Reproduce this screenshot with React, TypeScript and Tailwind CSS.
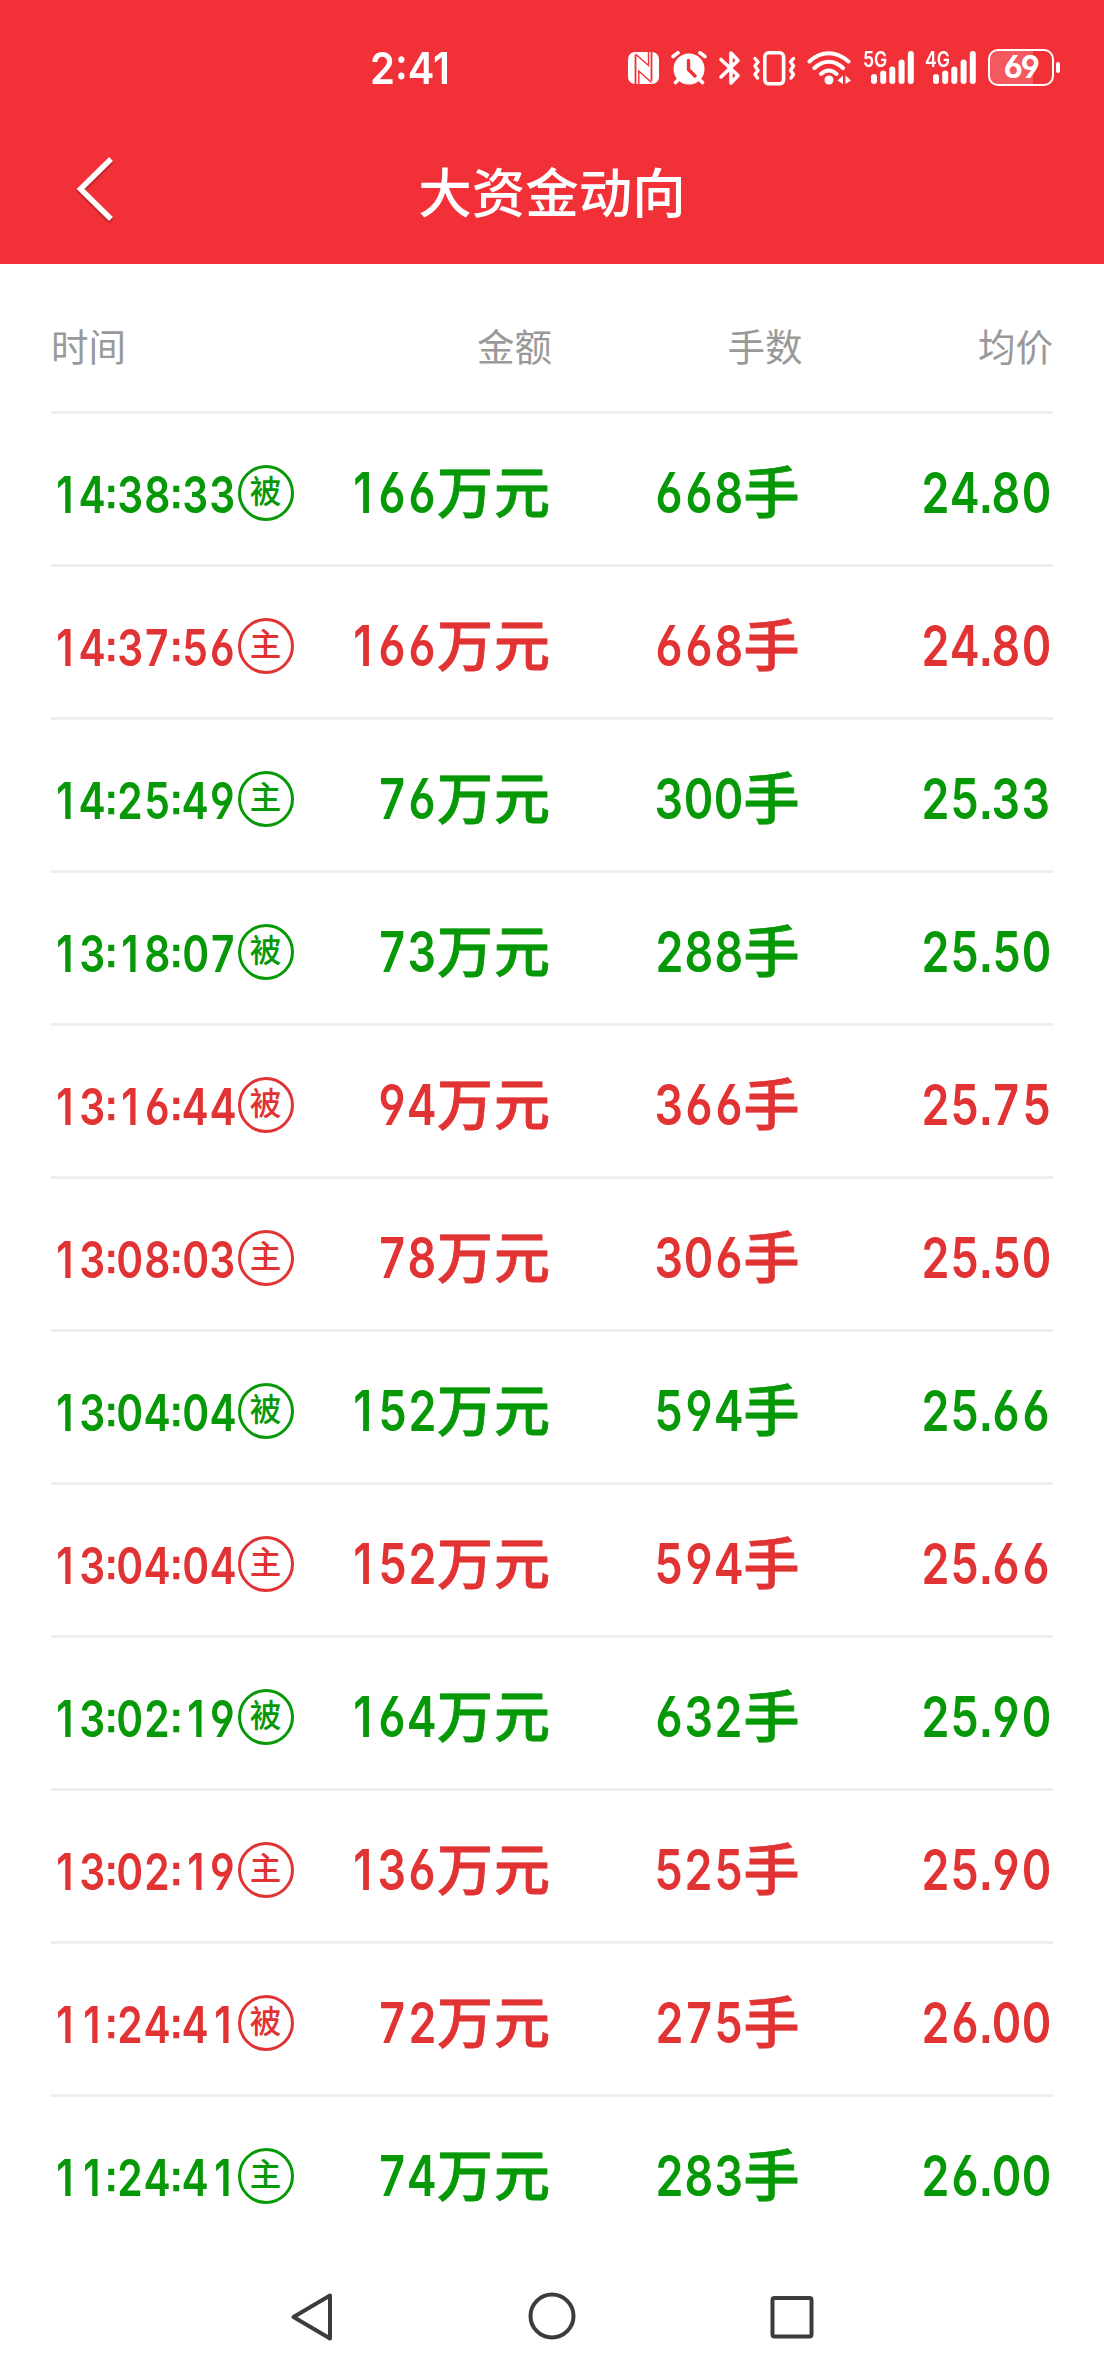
import React from "react";

type Tone = "up" | "down";
type Row = { time: string; tag: "主" | "被"; amount: string; lots: string; price: string; tone: Tone };

const rows: Row[] = [
  { time: "14:38:33", tag: "被", amount: "166", lots: "668", price: "24.80", tone: "down" },
  { time: "14:37:56", tag: "主", amount: "166", lots: "668", price: "24.80", tone: "up" },
  { time: "14:25:49", tag: "主", amount: "76", lots: "300", price: "25.33", tone: "down" },
  { time: "13:18:07", tag: "被", amount: "73", lots: "288", price: "25.50", tone: "down" },
  { time: "13:16:44", tag: "被", amount: "94", lots: "366", price: "25.75", tone: "up" },
  { time: "13:08:03", tag: "主", amount: "78", lots: "306", price: "25.50", tone: "up" },
  { time: "13:04:04", tag: "被", amount: "152", lots: "594", price: "25.66", tone: "down" },
  { time: "13:04:04", tag: "主", amount: "152", lots: "594", price: "25.66", tone: "up" },
  { time: "13:02:19", tag: "被", amount: "164", lots: "632", price: "25.90", tone: "down" },
  { time: "13:02:19", tag: "主", amount: "136", lots: "525", price: "25.90", tone: "up" },
  { time: "11:24:41", tag: "被", amount: "72", lots: "275", price: "26.00", tone: "up" },
  { time: "11:24:41", tag: "主", amount: "74", lots: "283", price: "26.00", tone: "down" },
];

/* Digits with straight-stemmed 6 and 9 and square punctuation. */
const digits =
  "whitespace-nowrap font-['Inter'] font-semibold [font-feature-settings:'cv03','cv04','ss07']";

function SignalBars({ label }: { label: string }) {
  return (
    <div className="relative h-[33px] w-[51px]">
      <svg className="block" width="51" height="33" viewBox="0 0 51 33" fill="#fff">
        <rect x="7" y="23" width="6" height="10" rx="3" />
        <rect x="16.2" y="19.5" width="6" height="13.5" rx="3" />
        <rect x="25.3" y="15.5" width="6" height="17.5" rx="3" />
        <rect x="34.6" y="8.5" width="6" height="24.5" rx="3" />
        <rect x="43.8" y="0" width="6" height="33" rx="3" />
      </svg>
      <span className="absolute -left-px top-0 origin-left scale-x-[0.82] font-['Inter'] text-[21.5px] font-semibold leading-[17px]">
        {label}
      </span>
    </div>
  );
}

function StatusBar() {
  return (
    <div className="relative h-[134px] text-white">
      <div className="absolute left-[370px] top-[46px] origin-left scale-x-[0.91] whitespace-nowrap font-['Inter'] text-[44px] font-semibold leading-[44px]">
        2:41
      </div>
      <div className="flex pl-[628px] pt-[51px]">
        <svg width="32" height="34" viewBox="0 0 32 34" fill="none">
          <rect x="0" y="1" width="31" height="32" rx="7" fill="#fff" />
          <path d="M7.5 4V33M23.5 1V30" stroke="#f23038" strokeWidth="1.8" />
          <path d="M7.500 3L20.500 14.500V1M23.500 31.500L10.800 20V33" stroke="#f23038" strokeWidth="1.4" />
        </svg>
        <svg className="ml-[11px]" width="37" height="34" viewBox="0 0 37 34" fill="none" strokeLinecap="round">
          <circle cx="18" cy="18" r="15.5" fill="#fff" />
          <path d="M2 5.5L7 1.8M29 1.8L34 5.5M8 28L4.500 31.500M28 28L31.500 31.500" stroke="#fff" strokeWidth="3.6" />
          <path d="M17.500 9.500V18.500L24 25" stroke="#f23038" strokeWidth="3.400" />
        </svg>
        <svg className="ml-[10px]" width="24" height="35" viewBox="0 0 24 35" fill="none" stroke="#fff" strokeWidth="3.6" strokeLinecap="round" strokeLinejoin="round">
          <path d="M3 8.500L20 24.500L13 32V2L20 9.500L3 26" />
        </svg>
        <svg className="ml-[11px]" width="43" height="35" viewBox="0 0 43 35" fill="none" stroke="#fff" strokeLinecap="round" strokeLinejoin="round">
          <rect x="11.800" y="1.800" width="18.800" height="31" rx="4" strokeWidth="3.600" />
          <path d="M2 7.500L5 11L2 15L5 19.500L2 23.500L4.500 27M40.500 7.500L37.500 11L40.500 15L37.500 19.500L40.500 23.500L38 27" strokeWidth="3.400" />
        </svg>
        <svg className="ml-[11px]" width="45" height="34" viewBox="0 0 45 34" fill="none" stroke="#fff" strokeWidth="4" strokeLinecap="round">
          <path d="M2.500 10.500C14 -0.500 29 -0.500 41.500 10.500M7.500 17C16 8.500 27.500 8.500 36 17M14 23C19 18.500 24.500 18.500 29.500 23" />
          <circle cx="22" cy="29" r="4.500" fill="#fff" stroke="none" />
          <path d="M36 24.500V33L30.500 29.500ZM38.500 24.500V33L44 29.500Z" fill="#fff" stroke="none" />
        </svg>
        <div className="ml-[12px]"><SignalBars label="5G" /></div>
        <div className="ml-[11px]"><SignalBars label="4G" /></div>
        <div className="-mt-[2px] ml-[11px] flex items-center">
          <div className="relative h-[37px] w-[66px] overflow-hidden rounded-[10px] border-[2.5px] border-white">
            <div className="absolute inset-y-0 left-0 w-[43px] bg-white/20" />
            <div className="relative text-center font-['Inter'] text-[31px] font-bold leading-[32px] tracking-[-1.5px] [font-feature-settings:'cv03','cv04']">
              69
            </div>
          </div>
          <div className="ml-[2px] h-[11px] w-[4px] rounded-full bg-white" />
        </div>
      </div>
    </div>
  );
}

function TitleBar() {
  return (
    <div className="relative flex h-[130px] justify-center">
      <svg className="absolute left-[70px] top-[18px] drop-shadow-[0_2px_1px_rgba(0,0,0,0.3)]" width="50" height="74" viewBox="0 0 50 74" fill="none" stroke="#fff" strokeWidth="5.4">
        <path d="M41 7L10.500 37L41 67" />
      </svg>
      <h1 className="pt-[23px] text-[53.5px] font-medium leading-[66px] text-white">大资金动向</h1>
    </div>
  );
}

function Time({ value }: { value: string }) {
  return (
    <span className={`${digits} flex text-[51px] leading-[60px]`}>
      {value.split("").map((c, i) =>
        c === ":" ? (
          <span key={i} className="flex w-[11px] justify-center [font-feature-settings:'case','ss07']">
            <span className="inline-block scale-x-[0.8] scale-y-[0.86]">{c}</span>
          </span>
        ) : (
          <span key={i} className="flex w-[27.2px] justify-center">
            <span className="inline-block scale-x-[0.8]">{c}</span>
          </span>
        ),
      )}
    </span>
  );
}

function Figure({ value }: { value: string }) {
  return (
    <span className={`${digits} flex text-[56px] leading-[60px]`}>
      {value.split("").map((c, i) => (
        <span key={i} className={c === "." ? "flex w-[11.500px] justify-center" : "flex w-[29.8px] justify-center"}>
          <span className="inline-block scale-x-[0.8]">{c}</span>
        </span>
      ))}
    </span>
  );
}

function Unit({ text }: { text: string }) {
  return (
    <span className="-mt-[4px] text-[56px] font-medium leading-[60px] tracking-[1px] [-webkit-text-stroke:0.8px_currentColor]">
      {text}
    </span>
  );
}

function TradeRow({ row }: { row: Row }) {
  return (
    <li className={`grid h-[153px] grid-cols-4 border-b-[3px] border-b-[#eeeeee] last:border-b-white ${row.tone === "up" ? "text-[#e13333]" : "text-[#069806]"}`}>
      <div className="flex pt-[51px]">
        <Time value={row.time} />
        <span className="ml-[1.5px] flex h-[56px] w-[56px] shrink-0 items-center justify-center rounded-full border-[3px] border-current text-[31.5px] font-medium leading-none">
          <span className="-mt-[6px]">{row.tag}</span>
        </span>
      </div>
      <div className="flex justify-end pr-px pt-[49px]">
        <Figure value={row.amount} />
        <Unit text="万元" />
      </div>
      <div className="flex justify-end pr-[2px] pt-[49px]">
        <Figure value={row.lots} />
        <Unit text="手" />
      </div>
      <div className="flex justify-end pr-[2px] pt-[49px]">
        <Figure value={row.price} />
      </div>
    </li>
  );
}

export default function App() {
  return (
    <div className="flex h-[2376px] w-[1104px] flex-col overflow-hidden bg-white font-['Noto_Sans_CJK_SC',sans-serif]">
      <header className="h-[264px] shrink-0 bg-[#f23038]">
        <StatusBar />
        <TitleBar />
      </header>
      <main className="px-[51px]">
        <div className="grid h-[150px] grid-cols-4 items-center border-b-[3px] border-[#eeeeee] pt-[16px] text-[37.5px] text-[#999999]">
          <span>时间</span>
          <span className="text-right">金额</span>
          <span className="text-right">手数</span>
          <span className="text-right">均价</span>
        </div>
        <ul>
          {rows.map((row, i) => (
            <TradeRow key={i} row={row} />
          ))}
        </ul>
      </main>
      <nav className="flex h-[126px] shrink-0 items-center justify-between px-[288px] pt-[8px]">
        <svg width="48" height="54" viewBox="0 0 48 54" fill="none" stroke="#3c3c3c" strokeWidth="4" strokeLinejoin="round">
          <path d="M5.500 27L42 5.500V48.500Z" />
        </svg>
        <svg width="54" height="54" viewBox="0 0 54 54" fill="none" stroke="#3c3c3c" strokeWidth="4">
          <circle cx="27" cy="26" r="21.500" />
        </svg>
        <svg width="48" height="54" viewBox="0 0 48 54" fill="none" stroke="#3c3c3c" strokeWidth="4">
          <rect x="4.500" y="8" width="39" height="38.500" rx="2" />
        </svg>
      </nav>
    </div>
  );
}
